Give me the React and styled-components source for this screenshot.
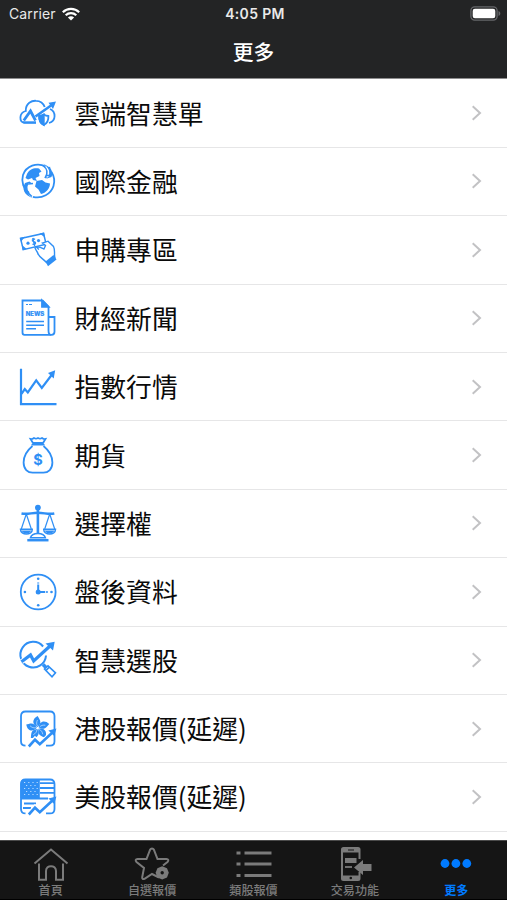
import React from 'react';
import styled, { createGlobalStyle } from 'styled-components';

const BLUE = '#2f8ff5';

const GlobalStyle = createGlobalStyle`
  * {
    box-sizing: border-box;
  }
  body {
    margin: 0;
    background: #fff;
    font-family: 'Noto Sans CJK TC', 'Inter', sans-serif;
  }
`
const Screen = styled.div`
  display: flex;
  flex-direction: column;
  width: 507px;
  height: 900px;
  overflow: hidden;
  background: #fff;
`
const Header = styled.header`
  flex: none;
  height: 79.4px;
  background: #232425;
  border-bottom: 1px solid #8d8d8e;
  color: #fff;
`
const StatusBar = styled.div`
  display: grid;
  grid-template-columns: 1fr auto 1fr;
  align-items: center;
  height: 27px;
  padding: 0 6px 0 9px;
  font-family: 'Inter', sans-serif;
  font-size: 14px;
  color: #e9e9e9;
`
const Carrier = styled.div`
  display: flex;
  align-items: center;
  gap: 6px;
  letter-spacing: 0.1px;
`
const Clock = styled.div`
  font-size: 14px;
  font-weight: 600;
  letter-spacing: 0.35px;
`
const Battery = styled.svg`
  justify-self: end;
`
const Title = styled.h1`
  margin: 0;
  font-size: 20.8px;
  font-weight: 500;
  line-height: 49px;
  text-align: center;
`
const List = styled.ul`
  flex: 1;
  min-height: 0;
  margin: 0;
  padding: 0;
  overflow: hidden;
  list-style: none;
`
const ListItem = styled.li`
  display: flex;
  align-items: center;
  height: 68.4px;
  padding: 0 25px 0 18.5px;
  border-bottom: 1.4px solid #e6e6e7;
`
const ItemIcon = styled.svg`
  flex: none;
  width: 38px;
  height: 38px;
  overflow: visible;
  fill: none;
  stroke: ${BLUE};
  stroke-width: 1.8;
`
const ItemLabel = styled.span`
  flex: 1;
  margin-left: 18px;
  padding-bottom: 1px;
  font-size: 25.8px;
  line-height: 38px;
  color: #0a0a0a;
`
const Chevron = styled.svg`
  flex: none;
`
const TabBar = styled.nav`
  display: flex;
  flex: none;
  height: 60px;
  background: #151515;
  border-top: 1px solid #4a4a4a;
  border-bottom: 1px solid #000;
`
const Tab = styled.div`
  display: flex;
  flex: 1;
  flex-direction: column;
  align-items: center;
  padding-top: 4px;
  color: ${props => (props.$active ? '#007aff' : '#7b7b7b')};
  font-weight: ${props => (props.$active ? 700 : 500)};
`
const TabIcon = styled.svg`
  flex: none;
  width: 38px;
  height: 36px;
  fill: none;
  stroke: currentColor;
  stroke-width: 2;
`
const TabLabel = styled.span`
  flex: none;
  font-size: 12.1px;
  line-height: 18px;
`

const CloudIcon = () => (
  <ItemIcon viewBox="0 0 38 38">
    <path d="M17 28.800H5.500C0 28-.3 19 6.800 17 6.500 9 13 6.500 17 6.800c4.500 0 7.500 2.700 8.700 6.200M31 15c6 2.500 6.500 12-1 14" />
    <path d="m4.800 26.500 6.700-9.500 5 9.500" strokeWidth="2.800" />
    <path d="M4 28.300h13" strokeWidth="2" />
    <path d="m16.500 22.500 15.500-11" strokeWidth="2.600" />
    <path d="m37 7.500-7.500 1.200L34 15z" fill={BLUE} stroke="none" />
    <path d="M24.800 20.500c1.600 1 3 1.400 4.600 1.500.2 4.500-1.400 7.500-4.600 9-3.200-1.500-4.800-4.500-4.600-9 1.600-.1 3-.5 4.600-1.500z" fill="#fff" />
    <path d="M24.800 20.500v10.500c-3.200-1.500-4.800-4.500-4.600-9 1.600-.1 3-.5 4.600-1.500z" fill={BLUE} />
  </ItemIcon>
)

const GlobeIcon = () => (
  <ItemIcon viewBox="0 0 38 38">
    <path d="M26.500 4.500C18 0 7 4 4 13c-2 7 .5 14 6 18M14 34.800C23 37 32 32 34.500 24c1.500-5 .5-10-2-14" />
    <path d="M8 12c2-4.500 7-6.500 12-5.500l2.500 3-2.500 1.500.5 3-4 2 1.500 3-4-1-1-2-4 1.500-2.500-1.500z" fill={BLUE} stroke="none" />
    <path d="m17.500 19 5.500-1 3.500 2.500 4.500 1c0 5-4 9.500-9 10.500l-2.500-4.500-3.500-3z" fill={BLUE} stroke="none" />
    <path d="M23.500 1.500c6.500 3.500 8.500 9 5.500 14l-4-.5 3 1.500 4.500-1.500c2-5 .5-10-9-13.500z" fill={BLUE} stroke="none" />
    <path d="M24 3.500c4.500 3.500 5.200 8 2 12.500" strokeWidth="1.500" />
    <path d="m30.500 4.800 1 8-4 1" strokeWidth="1.300" />
    <path d="M14.500 36.500C7.500 32.500 6 26.500 9.500 21l4 1-3-2.500-4.500 1.500C2.500 27 5 33 14.500 36.500z" fill={BLUE} stroke="none" />
    <path d="M8.500 21.500c-2 5-.5 9.500 4.500 13M9 22l5-.5" strokeWidth="1.500" />
  </ItemIcon>
)

const CashIcon = () => (
  <ItemIcon viewBox="0 0 38 38">
    <path d="m1.500 7.400 23-5 2.700 10.800-22.900 5.500z" strokeWidth="1.500" />
    <path d="m1 6.800 5-1-4 5zM20.500 2.500l4.600-.9 1 5zM2.800 14l5 4-4.200 1.200z" fill={BLUE} stroke="none" />
    <circle cx="9" cy="12.200" r="1.600" fill={BLUE} stroke="none" />
    <circle cx="19.500" cy="9.600" r="1.600" fill={BLUE} stroke="none" />
    <path d="M16 8.500c-1-1-3.300-.3-2.500 1.500.7 1 2.500.5 3 1.700.5 1.600-2 2.300-3 1.200M13.700 7l2 8" strokeWidth="1.300" />
    <path d="M18.500 16.500c2-1.500 4.500 1 6.500 1.500l1.500-3.500-3-2.500 5.500-1.800 5.500 5.300c2 4 .3 7.500 1.400 11.500L27.500 31.500c-3.500-4-8-5.500-9-10-2-3-3-5-2-5.500s2 1.500 3.500 2.500" fill="#fff" strokeWidth="1.400" />
    <path d="m26.500 30.500 8-6.500 3 4.500-8.500 6.700z" fill={BLUE} stroke="none" />
  </ItemIcon>
)

const NewsIcon = () => (
  <ItemIcon viewBox="0 0 38 38">
    <path d="M23.500 1.500H3.500v32c0 1.500.7 2.300 2 2.300h27c2 0 3-1 3-3V18h-5.500" />
    <path d="M23.500 1.500 29.500 7.500v24c0 3 .8 4.300 2.500 4.300" />
    <path d="M23 1.500v6.300h6.500z" fill={BLUE} />
    <path d="M7 5.500h2m1 0h3" strokeWidth="1" />
    <text x="16" y="16.600" fill={BLUE} stroke={BLUE} strokeWidth=".2" fontFamily="Inter, sans-serif" fontSize="6" fontWeight="800" textAnchor="middle">NEWS</text>
    <path d="M7.200 22.500H25M7.200 26.200H25M7.200 29.800H17" strokeWidth="1.500" />
  </ItemIcon>
)

const ChartIcon = () => (
  <ItemIcon viewBox="0 0 38 38">
    <path d="M2 .8v35.300h35.500" strokeWidth="2.200" />
    <path d="m2.500 25.800 3.300-4.700 3 3.300 8.400-12 5.600 7.600L33 6.500" strokeWidth="2.200" />
    <path d="m36.200 2.300-7.200 2.700 5.700 5.500z" fill={BLUE} stroke="none" />
  </ItemIcon>
)

const MoneyBagIcon = () => (
  <ItemIcon viewBox="0 0 38 38">
    <path d="m14 7-2.500-4c1.500.2 2.500-.3 3.500-1 1.500 1 2.500 1 4 0 1.500 1 2.500 1 4 0 1 .7 2 1.200 3.500 1L24 7z" />
    <path d="M12.500 8.700h13" strokeWidth="1.600" />
    <path d="M13.500 10C8 14.500 4.600 20 4.600 26.500c0 6.500 4 10.200 9 10.200h10.800c5 0 9-3.700 9-10.200C33.400 20 30 14.500 24.500 10" />
    <text x="19" y="29.300" fill={BLUE} stroke="none" fontFamily="Inter, sans-serif" fontSize="14.500" fontWeight="700" textAnchor="middle">$</text>
  </ItemIcon>
)

const ScaleIcon = () => (
  <ItemIcon viewBox="0 0 38 38">
    <circle cx="18.900" cy="3.600" r="2.900" fill={BLUE} stroke="none" />
    <path d="M18.900 5v25" strokeWidth="2.600" />
    <path d="M2.500 9.500c6 1.200 10-.8 16.400-.8s10.400 2 16.400.8" strokeWidth="2.400" />
    <path d="m7.300 10-5 15m5-15 5 15m18.400-15-5 15m5-15 5 15" strokeWidth="1.200" />
    <path d="M1.500 25.200h11.800c0 6.500-11.800 6.500-11.800 0zM24.700 25.200h11.800c0 6.500-11.800 6.500-11.800 0z" strokeWidth="1.500" />
    <path d="M2.500 26.500h9.800c-1.500 4-8.300 4-9.800 0zM25.700 26.500h9.800c-1.500 4-8.300 4-9.800 0z" fill={BLUE} stroke="none" />
    <path d="M11.500 33.800c.8-3.200 4-4.300 7.400-4.300s6.600 1.100 7.400 4.300z" strokeWidth="1.600" />
    <path d="M8.300 36.200h21.200" strokeWidth="2.500" />
  </ItemIcon>
)

const ClockIcon = () => (
  <ItemIcon viewBox="0 0 38 38">
    <circle cx="19.200" cy="19" r="17.400" />
    <path d="M19.200 18.500v-9m0 9.500h9.500" strokeWidth="2" strokeDasharray="7 1" />
    <circle cx="19.200" cy="19" r="2.500" fill={BLUE} stroke="none" />
    <g fill={BLUE} stroke="none">
      <circle cx="19.200" cy="5.700" r="1.300" />
      <circle cx="19.200" cy="32.300" r="1.300" />
      <circle cx="5.900" cy="19" r="1.300" />
      <circle cx="32.500" cy="19" r="1.300" />
    </g>
  </ItemIcon>
)

const SearchChartIcon = () => (
  <ItemIcon viewBox="0 0 38 38">
    <path d="M24.100 5.500A12.800 12.800 0 1 0 27 14.500" strokeWidth="2" />
    <path d="m2.500 20.800 9-6.800 3.200 6L31 5" stroke="#fff" strokeWidth="5" />
    <path d="m2.500 20.800 9-6.800 3.200 6L31 5" strokeWidth="3.200" />
    <path d="M35.700.7 26.500 2.500l7.500 7z" fill={BLUE} stroke="none" />
    <path d="m24 23.500 3.500 3.500" strokeWidth="3.500" />
    <path d="m25.500 28 3.500-3.200 7.500 7-3.500 4z" fill="#fff" strokeWidth="1.600" />
    <path d="m27 29.300 3.500-3.300" strokeWidth="1.600" />
  </ItemIcon>
)

// arrow shared by the two foreign stock icons
const TrendArrow = () => (
  <>
    <path d="m9.800 36.500 6.200-7 4.800 5 12.400-11.700" stroke="#fff" strokeWidth="5" />
    <path d="m9.800 36.500 6.200-6.800 4.800 4.500 12.400-11.400" strokeWidth="2.600" />
    <path d="m37.400 18.500-8 2 5.800 5.500z" fill={BLUE} stroke="none" />
  </>
)

const HongKongIcon = () => (
  <ItemIcon viewBox="0 0 38 38">
    <path d="M27 35.700h4c3 0 4.500-1.500 4.500-4.500V6c0-3-1.500-4.500-4.500-4.500H6.500C3.500 1.500 2 3 2 6v25.200c0 3 1.500 4.500 4.500 4.500" />
    {[-8, 64, 136, 208, 280].map(angle => (
      <g key={angle} transform={`translate(18.800 18) rotate(${angle})`}>
        <path d="M0-1C-5.500-4-4.500-10 1.500-12 2.500-9 6-5 0-1z" fill={BLUE} stroke="none" />
        <path d="M0-2c-1-2-.5-4 .8-6" stroke="#fff" strokeWidth=".5" />
      </g>
    ))}
    <TrendArrow />
  </ItemIcon>
)

const AmericaIcon = () => (
  <ItemIcon viewBox="0 0 38 38">
    <path d="M27 35.400h4c3 0 4.500-1.500 4.500-4.500V6c0-3-1.500-4.500-4.500-4.500H6.500C3.500 1.500 2 3 2 6v24.900c0 3 1.500 4.500 4.500 4.500" />
    <path d="M1.500 20V5.500c0-3 1.500-4.500 4.500-4.500h14.800v19z" fill={BLUE} stroke="none" />
    <g stroke="#b9dbff" strokeWidth="1.100" strokeDasharray="1.200 3">
      <path d="M5 4.500h14M7 7.500h12M5 10.500h14M7 13.500h12M5 16.500h14" />
    </g>
    <path d="M21 5.200h14M21 10h14M21 14.800h14M2 20.500h27M5 25.500h12M4 30h8" strokeWidth="1.800" />
    <TrendArrow />
  </ItemIcon>
)

const items = [
  { label: '雲端智慧單', Icon: CloudIcon },
  { label: '國際金融', Icon: GlobeIcon },
  { label: '申購專區', Icon: CashIcon },
  { label: '財經新聞', Icon: NewsIcon },
  { label: '指數行情', Icon: ChartIcon },
  { label: '期貨', Icon: MoneyBagIcon },
  { label: '選擇權', Icon: ScaleIcon },
  { label: '盤後資料', Icon: ClockIcon },
  { label: '智慧選股', Icon: SearchChartIcon },
  { label: '港股報價(延遲)', Icon: HongKongIcon },
  { label: '美股報價(延遲)', Icon: AmericaIcon },
]

const HomeIcon = () => (
  <TabIcon viewBox="0 0 38 36">
    <path d="m2.500 18.500 16.500-14 16.500 14M7 18.500v16.200h7V26c0-6.500 10-6.500 10 0v8.700h7V18.500" />
  </TabIcon>
)

const StarIcon = () => (
  <TabIcon viewBox="0 0 38 36">
    <path d="M26 32.500 19 29l-7.500 4.800c-1.500.7-2.600 0-2.300-1.500L11 23l-7.500-6c-1.500-1.500-.8-3 1-3h9L17.200 4.500c.8-1.500 2.800-1.500 3.600 0L24.500 14h9c1.800 0 2.500 1.500 1 3L30 20.500" />
    <path d="M29.200 21.200 34 23.200l1.800 4.600-1.800 4.600-4.800 2-4.800-2-1.800-4.600 1.800-4.600z" fill="currentColor" stroke="none" />
    <circle cx="29.200" cy="27.800" r="1.700" fill="#151515" stroke="none" />
  </TabIcon>
)

const MenuIcon = () => (
  <TabIcon viewBox="0 0 38 36">
    <path d="M1.500 8h4M9.500 8h27M1.500 19h4M9.500 19h27M1.500 30.500h4M9.500 30.500h27" strokeWidth="2.800" />
  </TabIcon>
)

const TradeIcon = () => (
  <TabIcon viewBox="0 0 38 36">
    <path d="M23.500 14V4.500c0-1-.5-1.500-1.500-1.500H7.500C6.500 3 6 3.500 6 4.500v29c0 1 .5 1.500 1.500 1.500H22c1 0 1.500-.5 1.500-1.500V27" />
    <path d="M6 5.500h17.500M6 32.500h17.500" strokeWidth="4" />
    <path d="M12 5h6" stroke="#151515" strokeWidth="1" />
    <circle cx="14.800" cy="33" r="1.300" fill="#151515" stroke="none" />
    <path d="M9 15.500h11.500" strokeWidth="5" />
    <path d="M9 22h7" strokeWidth="1.800" />
    <path d="m18 22.500 9-7.500v4h8.500v7H27v4z" fill="currentColor" stroke="none" />
  </TabIcon>
)

const MoreIcon = () => (
  <TabIcon viewBox="0 0 38 36">
    <g fill="currentColor" stroke="none">
      <circle cx="8" cy="18.500" r="4.400" />
      <circle cx="18.900" cy="18.500" r="4.400" />
      <circle cx="29.800" cy="18.500" r="4.400" />
    </g>
  </TabIcon>
)

const tabs = [
  { label: '首頁', Icon: HomeIcon },
  { label: '自選報價', Icon: StarIcon },
  { label: '類股報價', Icon: MenuIcon },
  { label: '交易功能', Icon: TradeIcon },
  { label: '更多', Icon: MoreIcon, active: true },
]

const App = () => (
  <>
    <GlobalStyle />
    <Screen>
      <Header>
        <StatusBar>
          <Carrier>
            Carrier
            <svg width="18" height="14" viewBox="0 0 18 14" fill="none" stroke="#fff" strokeWidth="2.200">
              <path d="M.8 5.200c4.600-4.400 11.800-4.400 16.400 0M3.700 8.300c3-2.900 7.600-2.900 10.600 0" />
              <path d="M9 13.600 5.900 10.500c1.800-1.600 4.400-1.600 6.200 0z" fill="#fff" stroke="none" />
            </svg>
          </Carrier>
          <Clock>4:05 PM</Clock>
          <Battery width="31" height="15" viewBox="0 0 31 15">
            <rect x=".9" y=".9" width="26.200" height="13.200" rx="3.800" fill="none" stroke="#66676a" strokeWidth="1.300" />
            <rect x="2.700" y="2.700" width="22.600" height="9.600" rx="2.200" fill="#fff" />
            <path d="M28.500 5v5c2.400-.8 2.400-4.200 0-5z" fill="#66676a" />
          </Battery>
        </StatusBar>
        <Title>更多</Title>
      </Header>
      <List>
        {items.map(({ label, Icon }) => (
          <ListItem key={label}>
            <Icon />
            <ItemLabel>{label}</ItemLabel>
            <Chevron width="11" height="16" viewBox="0 0 11 16" fill="none" stroke="#c2c2c4" strokeWidth="2">
              <path d="m1.700 1.200 7.300 6.800-7.300 6.800" />
            </Chevron>
          </ListItem>
        ))}
      </List>
      <TabBar>
        {tabs.map(({ label, Icon, active }) => (
          <Tab key={label} $active={active}>
            <Icon />
            <TabLabel>{label}</TabLabel>
          </Tab>
        ))}
      </TabBar>
    </Screen>
  </>
)

export default App
